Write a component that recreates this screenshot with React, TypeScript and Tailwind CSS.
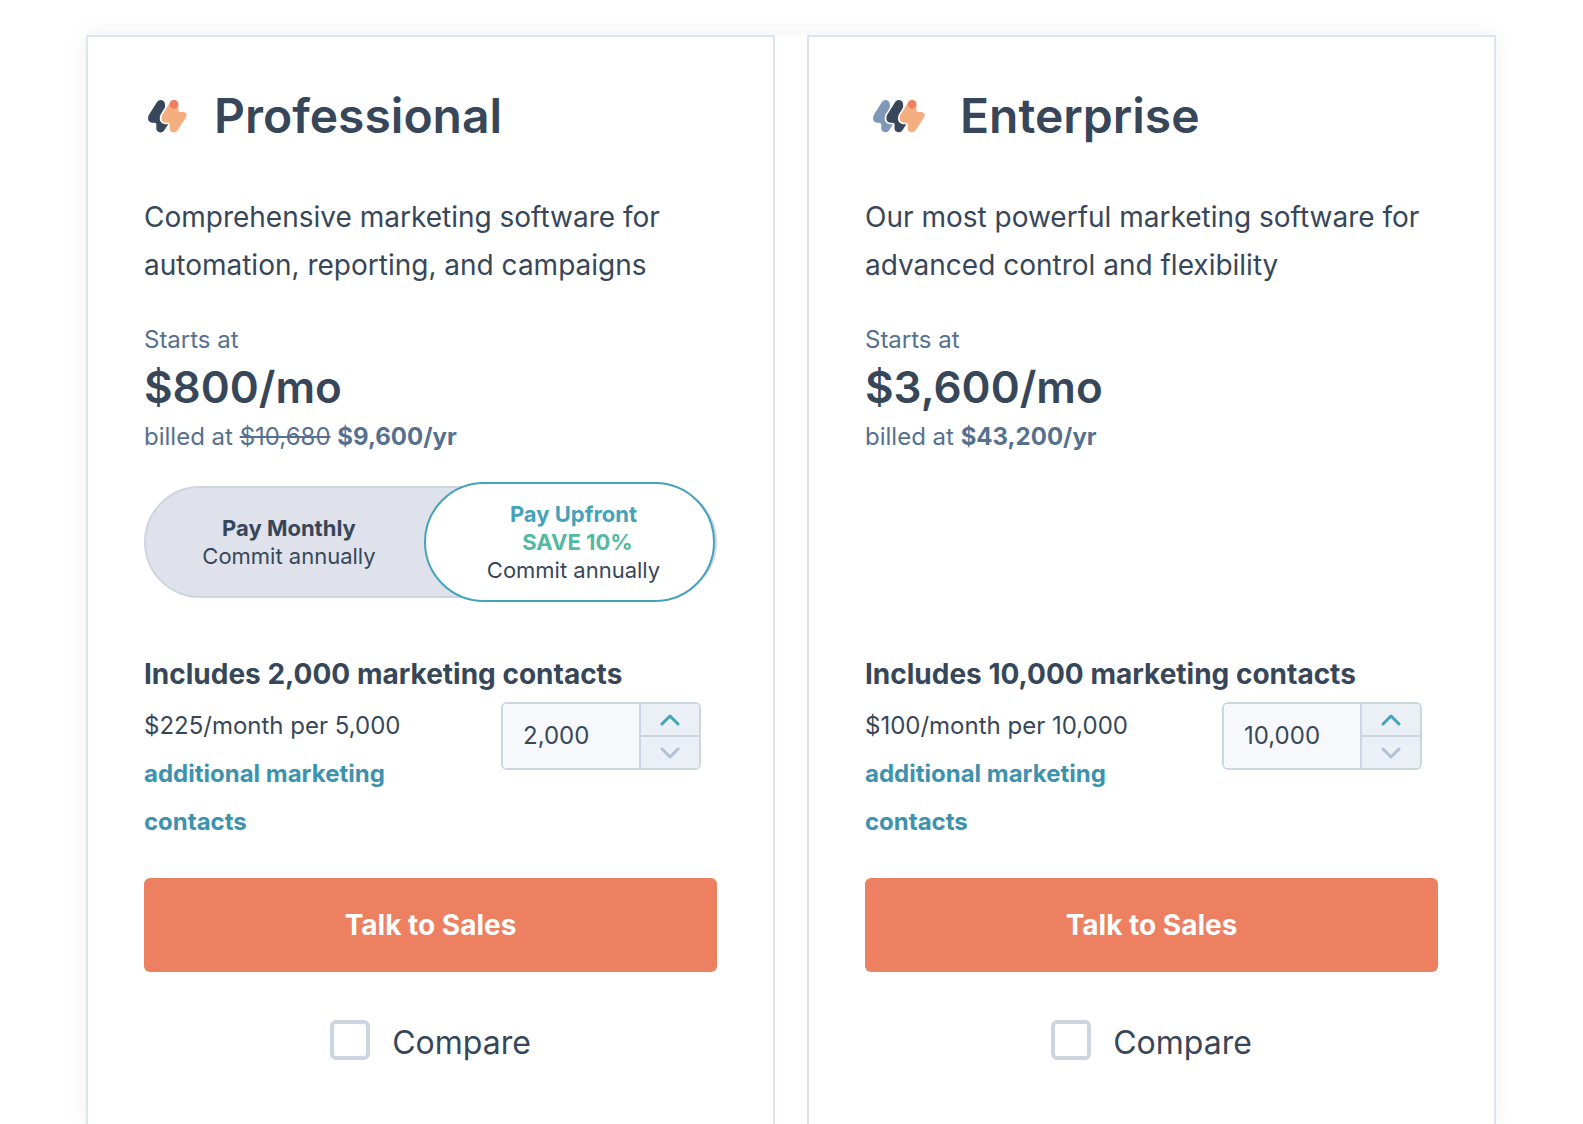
import { useState } from "react";

type Plan = {
  name: string;
  bolts: number;
  description: string;
  price: string;
  oldYearly?: string;
  yearly: string;
  toggle: boolean;
  step: number;
  rate: string;
  base: number;
};

const plans: Plan[] = [
  {
    name: "Professional",
    bolts: 2,
    description: "Comprehensive marketing software for automation, reporting, and campaigns",
    price: "$800/mo",
    oldYearly: "$10,680",
    yearly: "$9,600/yr",
    toggle: true,
    step: 5000,
    rate: "$225/month per 5,000",
    base: 2000,
  },
  {
    name: "Enterprise",
    bolts: 3,
    description: "Our most powerful marketing software for advanced control and flexibility",
    price: "$3,600/mo",
    yearly: "$43,200/yr",
    toggle: false,
    step: 10000,
    rate: "$100/month per 10,000",
    base: 10000,
  },
];

const BOLT =
  "M38 0a13 13 0 0 1 13 13v17q0 6 6 6h8q16 2 9 16L49 91a13 13 0 0 1-24-8V73q0-5-5-5H11Q-4 65 2 46L27 6Q31 0 38 0z";

function BoltLogo({ count }: { count: number }) {
  const fills = count === 3 ? ["#7f98b8", "#374759", "#f4ae80"] : ["#374759", "#f4ae80"];
  const width = 80 + (count - 1) * 40;
  return (
    <svg
      aria-hidden="true"
      viewBox={`0 1 ${width} 99`}
      className={count === 3 ? "h-[33px] w-[53px] shrink-0" : "h-[33px] w-10 shrink-0"}
    >
      {fills.map((fill, i) => (
        <g key={fill} transform={`translate(${i * 40} 1)`}>
          {i > 0 && <path d={BOLT} fill="#fff" stroke="#fff" strokeWidth="10" />}
          <path d={BOLT} fill={fill} />
        </g>
      ))}
      <circle cx={38 + (count - 1) * 40} cy="14" r="13" fill="#ee7f60" />
    </svg>
  );
}

function Chevron({ up }: { up: boolean }) {
  return (
    <svg aria-hidden="true" viewBox="0 0 20 12" className="h-3 w-5" fill="none" stroke="currentColor" strokeWidth="3" strokeLinecap="round" strokeLinejoin="round">
      <path d={up ? "M2 10 10 2 18 10" : "M2 2 10 10 18 2"} />
    </svg>
  );
}

function BillingToggle() {
  const [upfront, setUpfront] = useState(true);
  const active = "border-[#45a2bb] bg-white h-[120px]";
  const idle = "border-transparent h-[112px]";
  return (
    <div className="flex h-[112px] items-center rounded-full border-2 border-[#cdd5e1] bg-[#dfe2ea] text-[22px] leading-7">
      <button
        type="button"
        aria-pressed={!upfront}
        onClick={() => setUpfront(false)}
        className={`flex flex-1 flex-col items-center justify-center rounded-full border-2 pl-2 ${upfront ? idle : active}`}
      >
        <span className="font-bold">Pay Monthly</span>
        <span className="font-normal">Commit annually</span>
      </button>
      <button
        type="button"
        aria-pressed={upfront}
        onClick={() => setUpfront(true)}
        className={`flex w-[291px] flex-col items-center justify-center rounded-full border-2 pl-2 ${upfront ? active : idle}`}
      >
        <span className="font-bold text-[#45a2bb]">Pay Upfront</span>
        <span className="pl-2 font-bold text-[#53b9a2]">SAVE 10%</span>
        <span className="font-normal">Commit annually</span>
      </button>
    </div>
  );
}

function PlanCard({ plan }: { plan: Plan }) {
  const [contacts, setContacts] = useState(plan.base);
  const id = plan.name.toLowerCase();
  return (
    <section className="min-w-0 flex-1 border-2 border-b-0 border-[#dfe3eb] px-14 pt-14 pb-15">
      <div className={plan.bolts === 3 ? "flex items-center gap-[34px] pl-2" : "flex items-center gap-[26px] pl-1"}>
        <BoltLogo count={plan.bolts} />
        <h2 className="text-[48px] leading-[46px] font-semibold">{plan.name}</h2>
      </div>
      <p className="mt-[54px] text-[28px] leading-[48px] font-normal">{plan.description}</p>

      <p className="mt-8 text-[24px] leading-[38px] font-normal text-[#56708f]">Starts at</p>
      <p className="text-[44px] leading-[56px] font-semibold">{plan.price}</p>
      <p className="text-[24px] leading-[44px] font-normal text-[#56708f]">
        billed at {plan.oldYearly && <s>{plan.oldYearly}</s>} <strong className="font-bold">{plan.yearly}</strong>
      </p>

      <div className="mt-[27px] h-[112px]">{plan.toggle && <BillingToggle />}</div>

      <h3 className="mt-[52px] text-[28px] leading-[48px] font-bold">
        Includes {plan.base.toLocaleString("en-US")} marketing contacts
      </h3>
      <div className="mt-1 flex items-start justify-between pr-4">
        <p className="w-[300px] text-[24px] leading-[48px] font-normal">
          {plan.rate}{" "}
          <a href="#contacts" className="font-bold text-[#3d92ae]">
            additional marketing contacts
          </a>
        </p>
        <div className="flex h-[68px] w-[200px] overflow-hidden rounded-md border-2 border-[#cdd5e1]">
          <input
            aria-label={`${plan.name} marketing contacts`}
            inputMode="numeric"
            value={contacts.toLocaleString("en-US")}
            onChange={(e) => setContacts(Number(e.target.value.replace(/\D/g, "")))}
            className="w-0 flex-1 bg-[#f6f8fb] px-5 text-[24px] font-normal outline-none"
          />
          <div className="flex w-[60px] flex-col divide-y-2 divide-[#cdd5e1] border-l-2 border-[#cdd5e1] bg-[#eaf0f5]">
            <button
              type="button"
              aria-label="Increase contacts"
              onClick={() => setContacts(contacts + plan.step)}
              className="flex flex-1 items-center justify-center text-[#45a2bb]"
            >
              <Chevron up />
            </button>
            <button
              type="button"
              aria-label="Decrease contacts"
              disabled={contacts <= plan.base}
              onClick={() => setContacts(Math.max(plan.base, contacts - plan.step))}
              className="flex flex-1 items-center justify-center text-[#45a2bb] disabled:text-[#b3c0d4]"
            >
              <Chevron up={false} />
            </button>
          </div>
        </div>
      </div>

      <button type="button" className="mt-8 h-[94px] w-full rounded-md bg-[#ed8061] text-[28px] font-bold text-white">
        Talk to Sales
      </button>

      <div className="mt-12 flex items-start justify-center gap-[22px]">
        <input
          id={`${id}-compare`}
          type="checkbox"
          className="size-10 appearance-none rounded-md border-4 border-[#cdd5e1] bg-white checked:bg-[#45a2bb]"
        />
        <label htmlFor={`${id}-compare`} className="text-[32px] leading-[46px] font-normal">
          Compare
        </label>
      </div>
    </section>
  );
}

export default function App() {
  return (
    <main className="flex min-h-screen bg-white pt-[35px] pr-[87px] pl-[86px] font-['Inter',sans-serif] text-[#374759]">
      <div className="flex flex-1 gap-8 bg-white shadow-[0_0_20px_rgba(45,62,80,0.08)]">
        {plans.map((plan) => (
          <PlanCard key={plan.name} plan={plan} />
        ))}
      </div>
    </main>
  );
}
